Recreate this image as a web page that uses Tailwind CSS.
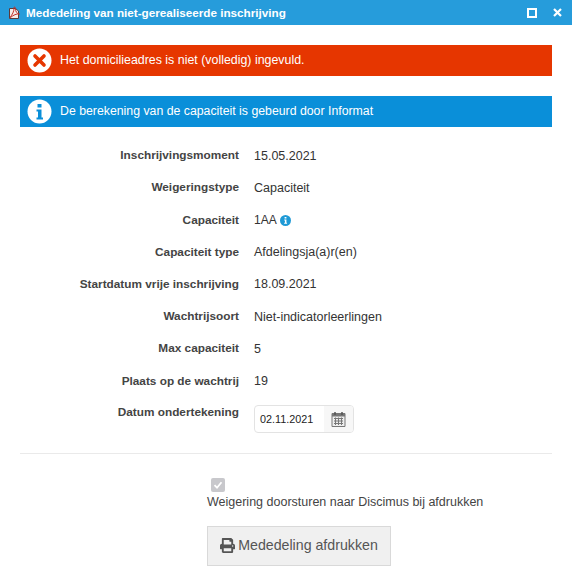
<!DOCTYPE html>
<html lang="nl">
<head>
    <meta charset="UTF-8">
    <title>Mededeling van niet-gerealiseerde inschrijving</title>
    <script src="https://cdn.jsdelivr.net/npm/@tailwindcss/browser@4"></script>
</head>
<body class="bg-white overflow-hidden font-['Liberation_Sans',Arial,sans-serif] text-[12.500px] text-[#333]">
    <div class="w-[572px] h-[576px] flex flex-col">
        <!-- Title bar -->
        <div class="h-[25px] bg-[#269cdb] flex items-center pl-[7px] pr-[10px] text-white">
            <svg class="w-[14px] h-[14px] mr-[5px]" viewBox="0 0 14 14">
                <path d="M2.500 2.500h6l3 2.500v7.500h-9z" fill="#f6ecea" stroke="#5a3a3a"/>
                <path d="M3 11.500C5 9 7.500 5 7 1.500c0-1 1.500-.5 1.500 1 0 3 1 5 4 5.500-3-.5-6 1-9 3.500z" fill="none" stroke="#c0302a" stroke-width="1"/>
            </svg>
            <span class="font-bold text-[11.700px]">Mededeling van niet-gerealiseerde inschrijving</span>
            <div class="ml-auto flex items-center gap-[16px]">
                <div class="w-[10px] h-[10px] border-2 border-white"></div>
                <svg class="w-[9px] h-[9px]" viewBox="0 0 9 9"><path d="M1 1l7 7M8 1l-7 7" stroke="#fff" stroke-width="2.200"/></svg>
            </div>
        </div>

        <div class="px-[20px] pt-[20px]">
            <!-- Alerts -->
            <div class="h-[31px] bg-[#e63600] text-white text-[12.400px] flex items-center pl-[7px] gap-[8px]">
                <svg class="w-[25px] h-[25px]" viewBox="0 0 25 25">
                    <circle cx="12.500" cy="12.500" r="12" fill="#fff"/>
                    <path d="M8 8l9 9M17 8l-9 9" stroke="#e63600" stroke-width="3.600" stroke-linecap="round"/>
                </svg>
                <span>Het domicilieadres is niet (volledig) ingevuld.</span>
            </div>
            <div class="h-[31px] mt-[20px] bg-[#0a8fd9] text-white text-[12.300px] flex items-center pl-[7px] gap-[8px]">
                <svg class="w-[25px] h-[25px]" viewBox="0 0 25 25">
                    <circle cx="12.500" cy="12.500" r="12" fill="#fff"/>
                    <rect x="10.500" y="5" width="4" height="3.500" fill="#0a8fd9"/>
                    <path d="M9.500 10.500h5v8h1.500v2H9.500v-2H11v-6H9.500z" fill="#0a8fd9"/>
                </svg>
                <span>De berekening van de capaciteit is gebeurd door Informat</span>
            </div>

            <!-- Details -->
            <dl class="mt-[13px] grid grid-cols-[219px_1fr] gap-x-[15px] auto-rows-[32.200px] items-center">
                <dt class="text-right font-bold text-[11.800px] text-[#444]">Inschrijvingsmoment</dt>
                <dd>15.05.2021</dd>
                <dt class="text-right font-bold text-[11.800px] text-[#444]">Weigeringstype</dt>
                <dd>Capaciteit</dd>
                <dt class="text-right font-bold text-[11.800px] text-[#444]">Capaciteit</dt>
                <dd class="flex items-center gap-[3px] text-[12px]">1AA
                    <svg class="w-[11px] h-[11px]" viewBox="0 0 12 12">
                        <circle cx="6" cy="6" r="6" fill="#1f9ad6"/>
                        <path d="M5 2.200h2v1.600H5zM4.600 5h2.400v3.400h.7v1.100H4.500V8.400h.9V6.100h-.8z" fill="#fff"/>
                    </svg>
                </dd>
                <dt class="text-right font-bold text-[11.800px] text-[#444]">Capaciteit type</dt>
                <dd>Afdelingsja(a)r(en)</dd>
                <dt class="text-right font-bold text-[11.800px] text-[#444]">Startdatum vrije inschrijving</dt>
                <dd>18.09.2021</dd>
                <dt class="text-right font-bold text-[11.800px] text-[#444]">Wachtrijsoort</dt>
                <dd>Niet-indicatorleerlingen</dd>
                <dt class="text-right font-bold text-[11.800px] text-[#444]">Max capaciteit</dt>
                <dd>5</dd>
                <dt class="text-right font-bold text-[11.800px] text-[#444]">Plaats op de wachtrij</dt>
                <dd>19</dd>
                <dt class="text-right font-bold text-[11.800px] text-[#444] self-start pt-[6px]">Datum ondertekening</dt>
                <dd class="self-start pt-[7px]">
                    <div class="w-[100px] h-[28px] border border-[#e3e3e3] rounded-[4px] flex overflow-hidden text-[#222] text-[10.800px]">
                        <span class="flex-1 pl-[5px] leading-[26px]">02.11.2021</span>
                        <span class="w-[29px] bg-[#f7f7f7] flex items-center justify-center">
                            <svg class="w-[15px] h-[16px]" viewBox="0 0 15 16">
                                <path d="M1 2.500h13v13H1z" fill="#eee" stroke="#777"/>
                                <path d="M1 2.500h13v3H1z" fill="#777"/>
                                <path d="M4 1v3M11 1v3" stroke="#555" stroke-width="1.500"/>
                                <path d="M3 7.500h9M3 10h9M3 12.500h9M4.500 6.500v7.500M7.500 6.500v7.500M10.500 6.500v7.500" stroke="#777"/>
                            </svg>
                        </span>
                    </div>
                </dd>
            </dl>

            <div class="mt-[23px] border-t border-[#eaeaea]"></div>

            <!-- Print section -->
            <div class="ml-[187px] mt-[24px]">
                <div class="ml-[4px] w-[14px] h-[14px] bg-[#c8c8cc] rounded-[2px] flex items-center justify-center">
                    <svg class="w-[10px] h-[10px]" viewBox="0 0 10 10"><path d="M1.500 5.200l2.500 2.500 4.500-5.500" fill="none" stroke="#fff" stroke-width="1.800"/></svg>
                </div>
                <p class="mt-[2px] text-[#444] leading-[16px]">Weigering doorsturen naar Discimus bij afdrukken</p>
                <button class="mt-[16px] w-[184px] h-[40px] bg-[#f0f0f0] border border-[#d9d9d9] text-[#555] text-[14.200px] flex items-center justify-center gap-[3px]">
                    <svg class="w-[15px] h-[15px]" viewBox="0 0 512 512">
                        <path d="M448 192V77.250c0-8.490-3.370-16.620-9.370-22.630L393.370 9.370c-6-6-14.140-9.370-22.630-9.370H96C78.330 0 64 14.330 64 32v160c-35.350 0-64 28.650-64 64v112c0 8.840 7.160 16 16 16h48v96c0 17.670 14.330 32 32 32h320c17.670 0 32-14.330 32-32v-96h48c8.840 0 16-7.160 16-16V256c0-35.350-28.650-64-64-64zm-64 256H128v-96h256v96zm0-224H128V64h192v48c0 8.840 7.160 16 16 16h48v96zm48 72c-13.250 0-24-10.750-24-24 0-13.260 10.750-24 24-24s24 10.740 24 24c0 13.250-10.750 24-24 24z" fill="#555"/>
                    </svg>
                    Mededeling afdrukken
                </button>
            </div>
        </div>
    </div>
</body>
</html>
